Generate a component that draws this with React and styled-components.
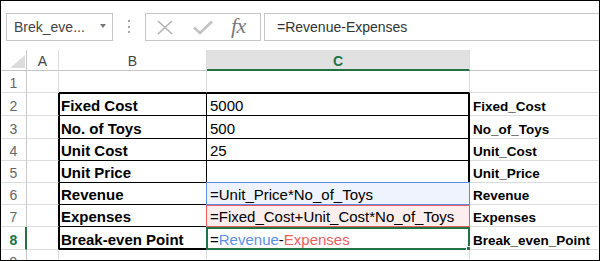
import React from "react";
import styled, { createGlobalStyle, css } from "styled-components";

const GlobalStyle = createGlobalStyle`
  html, body { margin: 0; padding: 0; background: #fff; }
  body { font-family: "Liberation Sans", Arial, sans-serif; }
  * { box-sizing: border-box; }
`;

const GREEN = "#217346";
const GRID = "#dadcdd";
const HEADLINE = "#c6c6c6";

const Frame = styled.div`
  width: 600px;
  height: 261px;
  border: 1px solid #000;
  overflow: hidden;
  display: flex;
  flex-direction: column;
  background: #fff;
`;

const Toolbar = styled.div`
  height: 49px;
  flex: none;
  display: flex;
  align-items: flex-start;
  padding: 12px 0 0 5px;
`;

const NameBox = styled.div`
  width: 107px;
  height: 28px;
  border: 1px solid ${HEADLINE};
  display: flex;
  align-items: center;
  justify-content: space-between;
  padding: 0 6px 0 7px;
  font-size: 14px;
  color: #444;
`;

const Caret = styled.span`
  width: 0;
  height: 0;
  border-left: 3.5px solid transparent;
  border-right: 3.5px solid transparent;
  border-top: 4px solid #777;
  margin-top: -2px;
`;

const Dots = styled.div`
  width: 2px;
  margin: 7px 15px 0;
  display: flex;
  flex-direction: column;
  gap: 3.5px;
`;

const Dot = styled.span`
  width: 2px;
  height: 2px;
  background: #a6a6a6;
`;

const ButtonGroup = styled.div`
  width: 116px;
  height: 28px;
  border: 1px solid ${HEADLINE};
  display: flex;
  align-items: center;
  padding-left: 11px;
`;

const IconSlot = styled.span`
  display: flex;
  align-items: center;
  margin-right: ${(p) => p.$gap || 0}px;
`;

const Fx = styled.span`
  font-family: "Liberation Serif", "Times New Roman", serif;
  font-style: italic;
  font-size: 22px;
  color: #7a7a7a;
  line-height: 1;
  letter-spacing: -0.5px;
  margin-top: -3px;
`;

const FormulaBar = styled.div`
  flex: 1;
  height: 28px;
  margin-left: 3px;
  border: 1px solid ${HEADLINE};
  border-right: none;
  display: flex;
  align-items: center;
  padding-left: 12px;
  font-size: 14px;
  color: #333;
`;

const Sheet = styled.div`
  display: grid;
  grid-template-columns: 26px 32px 148px 263px 1fr;
  grid-template-rows: 21px 22px 23px 23px 22px 22px 22px 22px 23px 22px;
`;

const Corner = styled.div`
  border-right: 1px solid ${HEADLINE};
  border-bottom: 1px solid ${HEADLINE};
  display: flex;
  align-items: flex-end;
  justify-content: flex-end;
  padding: 0 1px 2px 0;
`;

const ColHead = styled.div`
  border-right: 1px solid ${(p) => (p.$last ? "transparent" : GRID)};
  border-bottom: 1px solid ${HEADLINE};
  display: flex;
  align-items: center;
  justify-content: center;
  font-size: 14px;
  line-height: 1;
  color: #444;
  padding-top: 1px;
  ${(p) =>
    p.$active &&
    css`
      background: #e1e1e1;
      border-bottom: 2px solid ${GREEN};
      color: ${GREEN};
      font-weight: bold;
      padding-top: 2px;
    `}
`;

const RowHead = styled.div`
  border-right: 1px solid ${HEADLINE};
  border-bottom: 1px solid ${GRID};
  display: flex;
  align-items: flex-end;
  justify-content: center;
  padding-bottom: 2px;
  font-size: 14px;
  line-height: 14px;
  color: #666;
  ${(p) =>
    p.$active &&
    css`
      border-right: 2px solid ${GREEN};
      color: ${GREEN};
      font-weight: bold;
      padding-left: 1px;
    `}
`;

const edgeShadow = (edges = "") => {
  const parts = [];
  if (edges.includes("top")) parts.push("inset 0 1px 0 #000");
  if (edges.includes("left")) parts.push("inset 1px 0 0 #000");
  if (edges.includes("right")) parts.push("inset -1px 0 0 #000");
  if (edges.includes("bottom")) parts.push("inset 0 -1px 0 #000");
  return parts.length ? `box-shadow: ${parts.join(", ")};` : "";
};

const Cell = styled.div`
  position: relative;
  border-right: 1px solid ${(p) => p.$rb || GRID};
  border-bottom: 1px solid ${(p) => p.$bb || GRID};
  background: ${(p) => p.$bg || "#fff"};
  display: flex;
  align-items: flex-end;
  padding: 0 3px 2px ${(p) => p.$pl ?? 3}px;
  font-size: ${(p) => p.$size || 15}px;
  line-height: ${(p) => p.$size || 15}px;
  font-weight: ${(p) => (p.$bold ? "bold" : "normal")};
  color: #000;
  white-space: nowrap;
  ${(p) => edgeShadow(p.$edges)}
  ${(p) => p.$noRight && "border-right-color: transparent;"}
`;

const RangeBox = styled.span`
  position: absolute;
  top: ${(p) => p.$top ?? -1}px;
  left: -1px;
  right: -1px;
  bottom: -1px;
  border: ${(p) => p.$w || 1}px solid ${(p) => p.$color};
  pointer-events: none;
`;

const FillHandle = styled.span`
  position: absolute;
  right: -4px;
  bottom: -4px;
  width: 6px;
  height: 6px;
  background: ${GREEN};
  border: 1px solid #fff;
`;

const Ref = styled.span`
  color: ${(p) => p.$color};
`;

const BLUE = "#5b8ee8";
const RED = "#ee5c5c";

const rows = [
  { n: 1 },
  { n: 2, b: "Fixed Cost", c: "5000", d: "Fixed_Cost" },
  { n: 3, b: "No. of Toys", c: "500", d: "No_of_Toys" },
  { n: 4, b: "Unit Cost", c: "25", d: "Unit_Cost" },
  { n: 5, b: "Unit Price", c: "", d: "Unit_Price" },
  { n: 6, b: "Revenue", c: "=Unit_Price*No_of_Toys", d: "Revenue", range: { color: BLUE, bg: "#eef3fd", top: -1 } },
  { n: 7, b: "Expenses", c: "=Fixed_Cost+Unit_Cost*No_of_Toys", d: "Expenses", range: { color: RED, bg: "#fdeeee", top: 0 } },
  {
    n: 8,
    b: "Break-even Point",
    c: (
      <>
        =<Ref $color={BLUE}>Revenue</Ref>-<Ref $color={RED}>Expenses</Ref>
      </>
    ),
    d: "Break_even_Point",
    range: { color: GREEN, top: 0, w: 2, handle: true },
    active: true,
  },
  { n: 9 },
];

const CloseIcon = () => (
  <svg width="16" height="15" viewBox="0 0 16 15">
    <path d="M1 1 L15 14 M15 1 L1 14" stroke="#b3b3b3" strokeWidth="1.6" fill="none" />
  </svg>
);

const CheckIcon = () => (
  <svg width="20" height="15" viewBox="0 0 20 15">
    <path d="M1 7.5 L7 13 L19 1.5" stroke="#c2c2c2" strokeWidth="2.6" fill="none" />
  </svg>
);

const CornerTriangle = () => (
  <svg width="15" height="13" viewBox="0 0 15 13">
    <polygon points="15,0 15,13 0,13" fill="#dcdcdc" />
  </svg>
);

function Row({ r }) {
  const inTable = r.n >= 2 && r.n <= 8;
  const bEdges = inTable ? `left${r.n === 2 ? " top" : ""}${r.n === 8 ? " bottom" : ""}` : "";
  const cEdges = inTable && !r.range ? `right${r.n === 2 ? " top" : ""}` : "";
  return (
    <>
      <RowHead $active={r.active}>{r.n}</RowHead>
      <Cell $rb={inTable ? "#000" : undefined} />
      <Cell
        $bold
        $rb={inTable ? "#000" : undefined}
        $bb={inTable || r.n === 1 ? "#000" : undefined}
        $edges={bEdges}
        $pl={2}
      >
        {r.b}
      </Cell>
      <Cell
        $rb={inTable ? "#000" : undefined}
        $bb={inTable || r.n === 1 ? "#000" : undefined}
        $edges={cEdges}
        $bg={r.range && r.range.bg}
      >
        {r.c}
        {r.range && (
          <RangeBox $color={r.range.color} $top={r.range.top} $w={r.range.w}>
            {r.range.handle && <FillHandle />}
          </RangeBox>
        )}
      </Cell>
      <Cell $bold $size={13.5} $noRight>
        {r.d}
      </Cell>
    </>
  );
}

export default function App() {
  return (
    <>
      <GlobalStyle />
      <Frame>
        <Toolbar>
          <NameBox>
            <span>Brek_eve...</span>
            <Caret />
          </NameBox>
          <Dots>
            <Dot />
            <Dot />
            <Dot />
          </Dots>
          <ButtonGroup>
            <IconSlot $gap={20}>
              <CloseIcon />
            </IconSlot>
            <IconSlot $gap={18}>
              <CheckIcon />
            </IconSlot>
            <Fx>fx</Fx>
          </ButtonGroup>
          <FormulaBar>=Revenue-Expenses</FormulaBar>
        </Toolbar>
        <Sheet>
          <Corner>
            <CornerTriangle />
          </Corner>
          <ColHead>A</ColHead>
          <ColHead>B</ColHead>
          <ColHead $active>C</ColHead>
          <ColHead $last />
          {rows.map((r) => (
            <Row key={r.n} r={r} />
          ))}
        </Sheet>
      </Frame>
    </>
  );
}
